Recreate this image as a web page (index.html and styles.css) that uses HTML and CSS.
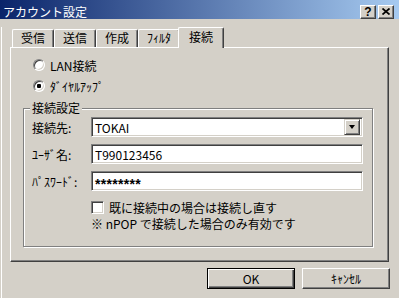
FILE: index.html
```html
<!DOCTYPE html>
<html lang="ja">
<head>
    <meta charset="UTF-8">
    <title>アカウント設定</title>
    <link rel="stylesheet" href="styles.css">
</head>
<body>
    <div class="window">
        <!-- Title bar -->
        <div class="titlebar">
            <span class="title">アカウント設定</span>
            <div class="caption-buttons">
                <div class="cap-btn help">?</div>
                <div class="cap-btn close">
                    <svg width="8" height="7" viewBox="0 0 8 7"><path d="M0.5 0.5 L7.5 6.5 M7.5 0.5 L0.5 6.5" stroke="#000" stroke-width="1.7" fill="none"/></svg>
                </div>
            </div>
        </div>

        <div class="client">
            <!-- Tabs -->
            <div class="tabs">
                <div class="tab">受信</div>
                <div class="tab">送信</div>
                <div class="tab">作成</div>
                <div class="tab">ﾌｨﾙﾀ</div>
                <div class="tab active">接続</div>
            </div>

            <div class="panel">
                <div class="radio-row"><span class="radio"></span>LAN接続</div>
                <div class="radio-row"><span class="radio checked"></span>ﾀﾞｲﾔﾙｱｯﾌﾟ</div>

                <div class="group">
                    <div class="group-title">接続設定</div>
                    <div class="fields">
                        <div class="label">接続先:</div>
                        <div class="edit combo">
                            <span>TOKAI</span>
                            <span class="drop"><i></i></span>
                        </div>
                        <div class="label">ﾕｰｻﾞ名:</div>
                        <div class="edit">T990123456</div>
                        <div class="label">ﾊﾟｽﾜｰﾄﾞ:</div>
                        <div class="edit password">********</div>
                    </div>
                    <div class="check-row"><span class="checkbox"></span>既に接続中の場合は接続し直す</div>
                    <div class="note">※ nPOP で接続した場合のみ有効です</div>
                </div>
            </div>

            <!-- Dialog buttons -->
            <div class="buttons">
                <div class="btn default">OK</div>
                <div class="btn">ｷｬﾝｾﾙ</div>
            </div>
        </div>
    </div>
</body>
</html>
```

FILE: styles.css
```css
/* General page */
* {
    box-sizing: border-box;
}

body {
    margin: 0;
    padding: 0;
    background: #d4d0c8;
    font-family: "Noto Sans CJK JP", "Noto Sans", sans-serif;
    font-size: 12px;
    color: #000;
}

.window {
    width: 399px;
    height: 298px;
    background: #d4d0c8;
    overflow: hidden;
}

/* Title bar */
.titlebar {
    height: 19px;
    display: flex;
    justify-content: space-between;
    align-items: flex-start;
    padding: 5px 5px 0 3px;
    background: linear-gradient(to right, #0a246a, #a6caf0);
}

.title {
    color: #fff;
    line-height: 13px;
}

.caption-buttons {
    display: flex;
    gap: 2px;
}

.cap-btn {
    width: 16px;
    height: 14px;
    background: #d4d0c8;
    border: 1px solid;
    border-color: #fff #404040 #404040 #fff;
    box-shadow: inset -1px -1px 0 #808080;
    display: flex;
    justify-content: center;
    align-items: center;
}

.cap-btn.help {
    font-family: "Liberation Sans", sans-serif;
    font-weight: bold;
    font-size: 12px;
    line-height: 12px;
    padding-bottom: 1px;
}

.cap-btn svg {
    display: block;
    margin-bottom: 1px;
}

/* Client area */
.client {
    height: 279px;
    margin-left: 1px;
    border-left: 1px solid #fff;
    border-bottom: 1px solid #404040;
    box-shadow: inset 0 -1px 0 #808080;
}

/* Tabs */
.tabs {
    display: flex;
    align-items: flex-end;
    height: 20px;
    margin: 8px 0 0 10px;
}

.tab {
    width: 42px;
    height: 18px;
    line-height: 16px;
    text-align: center;
    border-top: 1px solid #fff;
    border-left: 1px solid #fff;
    border-right: 1px solid #404040;
    border-radius: 2px 2px 0 0;
    box-shadow: inset -1px 0 0 #808080;
}

.tab.active {
    position: relative;
    z-index: 1;
    width: 46px;
    height: 21px;
    line-height: 18px;
    margin-left: -2px;
    margin-bottom: -1px;
    background: #d4d0c8;
}

/* Tab panel */
.panel {
    width: 379px;
    height: 215px;
    margin-left: 8px;
    padding-top: 8px;
    border-top: 1px solid #fff;
    border-left: 1px solid #fff;
    border-right: 1px solid #404040;
    border-bottom: 1px solid #404040;
    box-shadow: inset -1px -1px 0 #808080;
}

.radio-row {
    height: 18px;
    display: flex;
    align-items: center;
    gap: 5px;
    padding-left: 22px;
}

.radio-row + .radio-row {
    margin-top: 3px;
}

.radio {
    width: 12px;
    height: 12px;
    border-radius: 50%;
    background: #fff;
    border: 1px solid;
    border-color: #808080 #fff #fff #808080;
    box-shadow: inset 1px 1px 0 #404040, inset -1px -1px 0 #d4d0c8;
    display: flex;
    justify-content: center;
    align-items: center;
}

.radio.checked::after {
    content: "";
    width: 4px;
    height: 4px;
    border-radius: 1px;
    background: #000;
}

/* Group box */
.group {
    width: 350px;
    height: 139px;
    margin: 13px 0 0 12px;
    border: 1px solid #808080;
    box-shadow: inset 1px 1px 0 #fff, 1px 1px 0 #fff;
}

.group-title {
    width: fit-content;
    margin: -8px 0 0 6px;
    padding: 0 2px;
    line-height: 14px;
    background: #d4d0c8;
}

.fields {
    display: grid;
    grid-template-columns: 59px 272px;
    grid-auto-rows: 20px;
    row-gap: 7px;
    margin-top: 2px;
    padding-left: 8px;
}

.label {
    display: flex;
    align-items: center;
}

.edit {
    display: flex;
    align-items: center;
    padding-left: 3px;
    background: #fff;
    border: 1px solid;
    border-color: #808080 #fff #fff #808080;
    box-shadow: inset 1px 1px 0 #404040, inset -1px -1px 0 #d4d0c8;
}

.combo {
    justify-content: space-between;
    padding-right: 2px;
}

.drop {
    width: 16px;
    height: 16px;
    background: #d4d0c8;
    border: 1px solid;
    border-color: #d4d0c8 #404040 #404040 #d4d0c8;
    box-shadow: inset 1px 1px 0 #fff, inset -1px -1px 0 #808080;
    display: flex;
    justify-content: center;
    align-items: center;
}

.drop i {
    width: 0;
    height: 0;
    border-left: 3.5px solid transparent;
    border-right: 3.5px solid transparent;
    border-top: 4px solid #000;
}

.password {
    font-family: "Liberation Sans", sans-serif;
    font-weight: bold;
    font-size: 14px;
    letter-spacing: 0.3px;
    padding-top: 5px;
}

.check-row {
    height: 15px;
    display: flex;
    align-items: center;
    gap: 5px;
    margin: 9px 0 0 67px;
}

.checkbox {
    width: 13px;
    height: 13px;
    background: #fff;
    border: 1px solid;
    border-color: #808080 #fff #fff #808080;
    box-shadow: inset 1px 1px 0 #404040, inset -1px -1px 0 #d4d0c8;
}

.note {
    margin: 2px 0 0 67px;
    line-height: 14px;
}

/* Dialog buttons */
.buttons {
    display: flex;
    justify-content: flex-end;
    gap: 7px;
    margin-top: 6px;
    padding-right: 9px;
}

.btn {
    width: 88px;
    height: 21px;
    display: flex;
    justify-content: center;
    align-items: center;
    border: 1px solid;
    border-color: #fff #404040 #404040 #fff;
    box-shadow: inset -1px -1px 0 #808080;
}

.btn.default {
    border-color: #000;
    box-shadow: inset 1px 1px 0 #fff, inset -1px -1px 0 #404040, inset -2px -2px 0 #808080;
}
```
